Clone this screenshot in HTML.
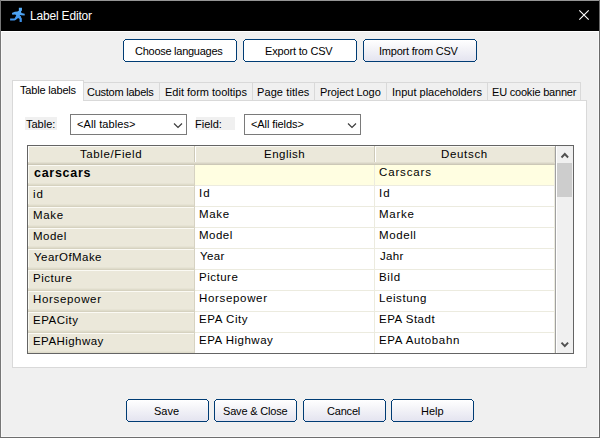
<!DOCTYPE html>
<html><head><meta charset="utf-8"><style>
html,body{margin:0;padding:0;width:600px;height:438px;overflow:hidden;background:#f0f0f0;}
body{position:relative;font-family:"Liberation Sans", sans-serif;}
</style></head><body>
<div style="position:absolute;left:0px;top:0px;width:600px;height:438px;background:#f0f0f0;"></div>
<div style="position:absolute;left:0px;top:0px;width:600px;height:1px;background:#959595;"></div>
<div style="position:absolute;left:0px;top:0px;width:1px;height:438px;background:#777;"></div>
<div style="position:absolute;left:599px;top:0px;width:1px;height:438px;background:#6a6a6a;"></div>
<div style="position:absolute;left:0px;top:437px;width:600px;height:1px;background:#6e6e6e;"></div>
<div style="position:absolute;left:1px;top:1px;width:598px;height:30px;background:#000;"></div>
<div style="position:absolute;left:1px;top:31px;width:598px;height:1px;background:#fff;"></div>
<div style="position:absolute;left:1px;top:32px;width:1px;height:405px;background:#f8f8f8;"></div>
<div style="position:absolute;left:598px;top:32px;width:1px;height:405px;background:#f8f8f8;"></div>
<div style="position:absolute;left:1px;top:436px;width:598px;height:1px;background:#f8f8f8;"></div>
<svg style="position:absolute;left:0;top:0" width="30" height="30" viewBox="0 0 30 30">
<defs><linearGradient id="ig" x1="0" y1="0" x2="0" y2="1"><stop offset="0" stop-color="#5ab0f8"/><stop offset="1" stop-color="#3a8ee8"/></linearGradient></defs>
<polygon points="18.85,7.8 21.95,7.8 21.95,10.7 21,11.1 21.4,12.9 24.7,13.8 24.7,15.5 21,15.3 21,17.3 21.8,18.4 21.8,22 19.6,22 19.6,19.1 18.1,18 15.6,19.9 14.5,20.6 10.1,20.6 10.1,18.6 14.5,18.4 16.3,15.5 15.2,14.4 12.3,14.8 11.9,13 14.8,11.8 17.4,11.5 18.85,10.7" fill="url(#ig)"/>
<circle cx="20.4" cy="15.6" r="0.6" fill="#000"/>
</svg>
<div style="position:absolute;left:30.00px;top:10.00px;font-size:12px;line-height:12px;color:#fff;font-weight:normal;letter-spacing:-0.182px;white-space:pre;">Label Editor</div>
<svg style="position:absolute;left:574px;top:5px" width="20" height="20" viewBox="0 0 20 20">
<path d="M5.3 5.3 L14.7 14.7 M14.7 5.3 L5.3 14.7" stroke="#fff" stroke-width="1.1" fill="none"/></svg>
<div style="position:absolute;left:123px;top:39px;width:114px;height:23px;"><div style="position:absolute;left:1px;top:1px;right:1px;bottom:1px;background:#ffffff;"></div><div style="position:absolute;left:2px;top:0;right:2px;height:1px;background:#003c74;"></div><div style="position:absolute;left:2px;bottom:0;right:2px;height:1px;background:#003c74;"></div><div style="position:absolute;left:0;top:2px;bottom:2px;width:1px;background:#003c74;"></div><div style="position:absolute;right:0;top:2px;bottom:2px;width:1px;background:#003c74;"></div><div style="position:absolute;left:1px;top:1px;width:1px;height:1px;background:#003c74;"></div><div style="position:absolute;right:1px;top:1px;width:1px;height:1px;background:#003c74;"></div><div style="position:absolute;left:1px;bottom:1px;width:1px;height:1px;background:#003c74;"></div><div style="position:absolute;right:1px;bottom:1px;width:1px;height:1px;background:#003c74;"></div></div>
<div style="position:absolute;left:135.00px;top:46.00px;font-size:11px;line-height:11px;color:#000;font-weight:normal;letter-spacing:-0.267px;white-space:pre;">Choose languages</div>
<div style="position:absolute;left:243px;top:39px;width:114px;height:23px;"><div style="position:absolute;left:1px;top:1px;right:1px;bottom:1px;background:#ffffff;"></div><div style="position:absolute;left:2px;top:0;right:2px;height:1px;background:#003c74;"></div><div style="position:absolute;left:2px;bottom:0;right:2px;height:1px;background:#003c74;"></div><div style="position:absolute;left:0;top:2px;bottom:2px;width:1px;background:#003c74;"></div><div style="position:absolute;right:0;top:2px;bottom:2px;width:1px;background:#003c74;"></div><div style="position:absolute;left:1px;top:1px;width:1px;height:1px;background:#003c74;"></div><div style="position:absolute;right:1px;top:1px;width:1px;height:1px;background:#003c74;"></div><div style="position:absolute;left:1px;bottom:1px;width:1px;height:1px;background:#003c74;"></div><div style="position:absolute;right:1px;bottom:1px;width:1px;height:1px;background:#003c74;"></div></div>
<div style="position:absolute;left:265.00px;top:46.00px;font-size:11px;line-height:11px;color:#000;font-weight:normal;letter-spacing:-0.167px;white-space:pre;">Export to CSV</div>
<div style="position:absolute;left:363px;top:39px;width:114px;height:23px;"><div style="position:absolute;left:1px;top:1px;right:1px;bottom:1px;background:linear-gradient(#ffffff, #f4f4f8 40%, #e4e4f0);"></div><div style="position:absolute;left:2px;top:0;right:2px;height:1px;background:#003c74;"></div><div style="position:absolute;left:2px;bottom:0;right:2px;height:1px;background:#003c74;"></div><div style="position:absolute;left:0;top:2px;bottom:2px;width:1px;background:#003c74;"></div><div style="position:absolute;right:0;top:2px;bottom:2px;width:1px;background:#003c74;"></div><div style="position:absolute;left:1px;top:1px;width:1px;height:1px;background:#003c74;"></div><div style="position:absolute;right:1px;top:1px;width:1px;height:1px;background:#003c74;"></div><div style="position:absolute;left:1px;bottom:1px;width:1px;height:1px;background:#003c74;"></div><div style="position:absolute;right:1px;bottom:1px;width:1px;height:1px;background:#003c74;"></div></div>
<div style="position:absolute;left:379.00px;top:46.00px;font-size:11px;line-height:11px;color:#000;font-weight:normal;letter-spacing:-0.214px;white-space:pre;">Import from CSV</div>
<div style="position:absolute;left:12px;top:100px;width:575px;height:268px;background:#fff;border:1px solid #d9d9d9;box-sizing:border-box;"></div>
<div style="position:absolute;left:83px;top:82px;width:77px;height:19px;background:#f0f0f0;border:1px solid #d9d9d9;box-sizing:border-box;"></div>
<div style="position:absolute;left:87.00px;top:87.00px;font-size:11px;line-height:11px;color:#000;font-weight:normal;letter-spacing:-0.250px;white-space:pre;">Custom labels</div>
<div style="position:absolute;left:159px;top:82px;width:94px;height:19px;background:#f0f0f0;border:1px solid #d9d9d9;box-sizing:border-box;"></div>
<div style="position:absolute;left:165.00px;top:87.00px;font-size:11px;line-height:11px;color:#000;font-weight:normal;letter-spacing:0.000px;white-space:pre;">Edit form tooltips</div>
<div style="position:absolute;left:252px;top:82px;width:63px;height:19px;background:#f0f0f0;border:1px solid #d9d9d9;box-sizing:border-box;"></div>
<div style="position:absolute;left:257.00px;top:87.00px;font-size:11px;line-height:11px;color:#000;font-weight:normal;letter-spacing:0.100px;white-space:pre;">Page titles</div>
<div style="position:absolute;left:314px;top:82px;width:73px;height:19px;background:#f0f0f0;border:1px solid #d9d9d9;box-sizing:border-box;"></div>
<div style="position:absolute;left:320.00px;top:87.00px;font-size:11px;line-height:11px;color:#000;font-weight:normal;letter-spacing:-0.091px;white-space:pre;">Project Logo</div>
<div style="position:absolute;left:386px;top:82px;width:102px;height:19px;background:#f0f0f0;border:1px solid #d9d9d9;box-sizing:border-box;"></div>
<div style="position:absolute;left:392.00px;top:87.00px;font-size:11px;line-height:11px;color:#000;font-weight:normal;letter-spacing:0.000px;white-space:pre;">Input placeholders</div>
<div style="position:absolute;left:487px;top:82px;width:94px;height:19px;background:#f0f0f0;border:1px solid #d9d9d9;box-sizing:border-box;"></div>
<div style="position:absolute;left:492.00px;top:87.00px;font-size:11px;line-height:11px;color:#000;font-weight:normal;letter-spacing:-0.200px;white-space:pre;">EU cookie banner</div>
<div style="position:absolute;left:12px;top:80px;width:72px;height:21px;background:#fff;border:1px solid #d9d9d9;border-bottom:none;box-sizing:border-box;"></div>
<div style="position:absolute;left:20.00px;top:85.00px;font-size:11px;line-height:11px;color:#000;font-weight:normal;letter-spacing:-0.182px;white-space:pre;">Table labels</div>
<div style="position:absolute;left:25px;top:117px;width:32px;height:13px;background:#f0f0f0;"></div>
<div style="position:absolute;left:26.00px;top:119.00px;font-size:11px;line-height:11px;color:#000;font-weight:normal;letter-spacing:0.000px;white-space:pre;">Table:</div>
<div style="position:absolute;left:196px;top:117px;width:39px;height:13px;background:#f0f0f0;"></div>
<div style="position:absolute;left:195.00px;top:119.00px;font-size:11px;line-height:11px;color:#000;font-weight:normal;letter-spacing:0.000px;white-space:pre;">Field:</div>
<div style="position:absolute;left:70px;top:114px;width:117px;height:21px;background:#fff;border:1px solid #7a7a7a;box-sizing:border-box;"></div>
<svg style="position:absolute;left:173px;top:120.5px" width="10" height="8" viewBox="0 0 10 8"><path d="M1 2.5 L5 6.5 L9 2.5" stroke="#3a3a3a" stroke-width="1.15" fill="none"/></svg>
<div style="position:absolute;left:77.00px;top:119.00px;font-size:11px;line-height:11px;color:#000;font-weight:normal;letter-spacing:0.091px;white-space:pre;">&lt;All tables&gt;</div>
<div style="position:absolute;left:244px;top:114px;width:117px;height:21px;background:#fff;border:1px solid #7a7a7a;box-sizing:border-box;"></div>
<svg style="position:absolute;left:347px;top:120.5px" width="10" height="8" viewBox="0 0 10 8"><path d="M1 2.5 L5 6.5 L9 2.5" stroke="#3a3a3a" stroke-width="1.15" fill="none"/></svg>
<div style="position:absolute;left:251.00px;top:119.00px;font-size:11px;line-height:11px;color:#000;font-weight:normal;letter-spacing:-0.091px;white-space:pre;">&lt;All fields&gt;</div>
<div style="position:absolute;left:27px;top:145px;width:547px;height:209px;background:#fff;border:1px solid #646464;box-sizing:border-box;"></div>
<div style="position:absolute;left:28px;top:146px;width:527px;height:19px;background:#ebe8da;"></div>
<div style="position:absolute;left:28px;top:146px;width:527px;height:1px;background:#fbfaf4;"></div>
<div style="position:absolute;left:28px;top:162px;width:527px;height:1px;background:#e2dfd0;"></div>
<div style="position:absolute;left:28px;top:163px;width:527px;height:1px;background:#d8d4c5;"></div>
<div style="position:absolute;left:28px;top:164px;width:527px;height:1px;background:#ccc8b7;"></div>
<div style="position:absolute;left:194px;top:146px;width:1px;height:16px;background:#cdc9b8;"></div>
<div style="position:absolute;left:195px;top:147px;width:1px;height:15px;background:#fff;"></div>
<div style="position:absolute;left:374px;top:146px;width:1px;height:16px;background:#cdc9b8;"></div>
<div style="position:absolute;left:375px;top:147px;width:1px;height:15px;background:#fff;"></div>
<div style="position:absolute;left:28px;top:147px;width:1px;height:15px;background:#fff;"></div>
<div style="position:absolute;left:554px;top:147px;width:1px;height:15px;background:#dcd8c8;"></div>
<div style="position:absolute;left:80.00px;top:149.00px;font-size:11.5px;line-height:11.5px;color:#000;font-weight:normal;letter-spacing:0.600px;white-space:pre;">Table/Field</div>
<div style="position:absolute;left:264.00px;top:149.00px;font-size:11.5px;line-height:11.5px;color:#000;font-weight:normal;letter-spacing:0.500px;white-space:pre;">English</div>
<div style="position:absolute;left:441.00px;top:149.00px;font-size:11.5px;line-height:11.5px;color:#000;font-weight:normal;letter-spacing:0.667px;white-space:pre;">Deutsch</div>
<div style="position:absolute;left:28px;top:165px;width:166px;height:21px;background:#ebe8da;"></div>
<div style="position:absolute;left:28px;top:165px;width:166px;height:1px;background:#fbfaf4;"></div>
<div style="position:absolute;left:28px;top:183px;width:166px;height:1px;background:#e6e3d4;"></div>
<div style="position:absolute;left:28px;top:184px;width:166px;height:1px;background:#dfdccb;"></div>
<div style="position:absolute;left:28px;top:185px;width:166px;height:1px;background:#d6d2c0;"></div>
<div style="position:absolute;left:28px;top:166px;width:1px;height:17px;background:#f8f8f0;"></div>
<div style="position:absolute;left:194px;top:165px;width:1px;height:21px;background:#d6d2c2;"></div>
<div style="position:absolute;left:195px;top:165px;width:360px;height:20px;background:#fffee1;"></div>
<div style="position:absolute;left:195px;top:185px;width:360px;height:1px;background:#ecebdf;"></div>
<div style="position:absolute;left:374px;top:165px;width:1px;height:21px;background:#ecebdf;"></div>
<div style="position:absolute;left:554px;top:165px;width:1px;height:21px;background:#ecebdf;"></div>
<div style="position:absolute;left:34.00px;top:167.00px;font-size:12.5px;line-height:12.5px;color:#000;font-weight:bold;letter-spacing:0.714px;white-space:pre;">carscars</div>
<div style="position:absolute;left:379.00px;top:167.00px;font-size:11.5px;line-height:11.5px;color:#000;font-weight:normal;letter-spacing:0.857px;white-space:pre;">Carscars</div>
<div style="position:absolute;left:28px;top:186px;width:166px;height:21px;background:#ebe8da;"></div>
<div style="position:absolute;left:28px;top:186px;width:166px;height:1px;background:#fbfaf4;"></div>
<div style="position:absolute;left:28px;top:204px;width:166px;height:1px;background:#e6e3d4;"></div>
<div style="position:absolute;left:28px;top:205px;width:166px;height:1px;background:#dfdccb;"></div>
<div style="position:absolute;left:28px;top:206px;width:166px;height:1px;background:#d6d2c0;"></div>
<div style="position:absolute;left:28px;top:187px;width:1px;height:17px;background:#f8f8f0;"></div>
<div style="position:absolute;left:194px;top:186px;width:1px;height:21px;background:#d6d2c2;"></div>
<div style="position:absolute;left:195px;top:186px;width:360px;height:20px;background:#fff;"></div>
<div style="position:absolute;left:195px;top:206px;width:360px;height:1px;background:#ecebdf;"></div>
<div style="position:absolute;left:374px;top:186px;width:1px;height:21px;background:#ecebdf;"></div>
<div style="position:absolute;left:554px;top:186px;width:1px;height:21px;background:#ecebdf;"></div>
<div style="position:absolute;left:33.00px;top:189.00px;font-size:11.5px;line-height:11.5px;color:#000;font-weight:normal;letter-spacing:1.000px;white-space:pre;">id</div>
<div style="position:absolute;left:199.00px;top:188.00px;font-size:11.5px;line-height:11.5px;color:#000;font-weight:normal;letter-spacing:1.000px;white-space:pre;">Id</div>
<div style="position:absolute;left:379.00px;top:188.00px;font-size:11.5px;line-height:11.5px;color:#000;font-weight:normal;letter-spacing:1.000px;white-space:pre;">Id</div>
<div style="position:absolute;left:28px;top:207px;width:166px;height:21px;background:#ebe8da;"></div>
<div style="position:absolute;left:28px;top:207px;width:166px;height:1px;background:#fbfaf4;"></div>
<div style="position:absolute;left:28px;top:225px;width:166px;height:1px;background:#e6e3d4;"></div>
<div style="position:absolute;left:28px;top:226px;width:166px;height:1px;background:#dfdccb;"></div>
<div style="position:absolute;left:28px;top:227px;width:166px;height:1px;background:#d6d2c0;"></div>
<div style="position:absolute;left:28px;top:208px;width:1px;height:17px;background:#f8f8f0;"></div>
<div style="position:absolute;left:194px;top:207px;width:1px;height:21px;background:#d6d2c2;"></div>
<div style="position:absolute;left:195px;top:207px;width:360px;height:20px;background:#fff;"></div>
<div style="position:absolute;left:195px;top:227px;width:360px;height:1px;background:#ecebdf;"></div>
<div style="position:absolute;left:374px;top:207px;width:1px;height:21px;background:#ecebdf;"></div>
<div style="position:absolute;left:554px;top:207px;width:1px;height:21px;background:#ecebdf;"></div>
<div style="position:absolute;left:33.00px;top:210.00px;font-size:11.5px;line-height:11.5px;color:#000;font-weight:normal;letter-spacing:0.667px;white-space:pre;">Make</div>
<div style="position:absolute;left:199.00px;top:209.00px;font-size:11.5px;line-height:11.5px;color:#000;font-weight:normal;letter-spacing:0.667px;white-space:pre;">Make</div>
<div style="position:absolute;left:379.00px;top:209.00px;font-size:11.5px;line-height:11.5px;color:#000;font-weight:normal;letter-spacing:0.750px;white-space:pre;">Marke</div>
<div style="position:absolute;left:28px;top:228px;width:166px;height:21px;background:#ebe8da;"></div>
<div style="position:absolute;left:28px;top:228px;width:166px;height:1px;background:#fbfaf4;"></div>
<div style="position:absolute;left:28px;top:246px;width:166px;height:1px;background:#e6e3d4;"></div>
<div style="position:absolute;left:28px;top:247px;width:166px;height:1px;background:#dfdccb;"></div>
<div style="position:absolute;left:28px;top:248px;width:166px;height:1px;background:#d6d2c0;"></div>
<div style="position:absolute;left:28px;top:229px;width:1px;height:17px;background:#f8f8f0;"></div>
<div style="position:absolute;left:194px;top:228px;width:1px;height:21px;background:#d6d2c2;"></div>
<div style="position:absolute;left:195px;top:228px;width:360px;height:20px;background:#fff;"></div>
<div style="position:absolute;left:195px;top:248px;width:360px;height:1px;background:#ecebdf;"></div>
<div style="position:absolute;left:374px;top:228px;width:1px;height:21px;background:#ecebdf;"></div>
<div style="position:absolute;left:554px;top:228px;width:1px;height:21px;background:#ecebdf;"></div>
<div style="position:absolute;left:33.00px;top:231.00px;font-size:11.5px;line-height:11.5px;color:#000;font-weight:normal;letter-spacing:0.500px;white-space:pre;">Model</div>
<div style="position:absolute;left:199.00px;top:230.00px;font-size:11.5px;line-height:11.5px;color:#000;font-weight:normal;letter-spacing:0.500px;white-space:pre;">Model</div>
<div style="position:absolute;left:379.00px;top:230.00px;font-size:11.5px;line-height:11.5px;color:#000;font-weight:normal;letter-spacing:0.600px;white-space:pre;">Modell</div>
<div style="position:absolute;left:28px;top:249px;width:166px;height:21px;background:#ebe8da;"></div>
<div style="position:absolute;left:28px;top:249px;width:166px;height:1px;background:#fbfaf4;"></div>
<div style="position:absolute;left:28px;top:267px;width:166px;height:1px;background:#e6e3d4;"></div>
<div style="position:absolute;left:28px;top:268px;width:166px;height:1px;background:#dfdccb;"></div>
<div style="position:absolute;left:28px;top:269px;width:166px;height:1px;background:#d6d2c0;"></div>
<div style="position:absolute;left:28px;top:250px;width:1px;height:17px;background:#f8f8f0;"></div>
<div style="position:absolute;left:194px;top:249px;width:1px;height:21px;background:#d6d2c2;"></div>
<div style="position:absolute;left:195px;top:249px;width:360px;height:20px;background:#fff;"></div>
<div style="position:absolute;left:195px;top:269px;width:360px;height:1px;background:#ecebdf;"></div>
<div style="position:absolute;left:374px;top:249px;width:1px;height:21px;background:#ecebdf;"></div>
<div style="position:absolute;left:554px;top:249px;width:1px;height:21px;background:#ecebdf;"></div>
<div style="position:absolute;left:34.00px;top:252.00px;font-size:11.5px;line-height:11.5px;color:#000;font-weight:normal;letter-spacing:0.444px;white-space:pre;">YearOfMake</div>
<div style="position:absolute;left:200.00px;top:251.00px;font-size:11.5px;line-height:11.5px;color:#000;font-weight:normal;letter-spacing:0.333px;white-space:pre;">Year</div>
<div style="position:absolute;left:380.00px;top:251.00px;font-size:11.5px;line-height:11.5px;color:#000;font-weight:normal;letter-spacing:0.333px;white-space:pre;">Jahr</div>
<div style="position:absolute;left:28px;top:270px;width:166px;height:21px;background:#ebe8da;"></div>
<div style="position:absolute;left:28px;top:270px;width:166px;height:1px;background:#fbfaf4;"></div>
<div style="position:absolute;left:28px;top:288px;width:166px;height:1px;background:#e6e3d4;"></div>
<div style="position:absolute;left:28px;top:289px;width:166px;height:1px;background:#dfdccb;"></div>
<div style="position:absolute;left:28px;top:290px;width:166px;height:1px;background:#d6d2c0;"></div>
<div style="position:absolute;left:28px;top:271px;width:1px;height:17px;background:#f8f8f0;"></div>
<div style="position:absolute;left:194px;top:270px;width:1px;height:21px;background:#d6d2c2;"></div>
<div style="position:absolute;left:195px;top:270px;width:360px;height:20px;background:#fff;"></div>
<div style="position:absolute;left:195px;top:290px;width:360px;height:1px;background:#ecebdf;"></div>
<div style="position:absolute;left:374px;top:270px;width:1px;height:21px;background:#ecebdf;"></div>
<div style="position:absolute;left:554px;top:270px;width:1px;height:21px;background:#ecebdf;"></div>
<div style="position:absolute;left:33.00px;top:273.00px;font-size:11.5px;line-height:11.5px;color:#000;font-weight:normal;letter-spacing:0.500px;white-space:pre;">Picture</div>
<div style="position:absolute;left:199.00px;top:272.00px;font-size:11.5px;line-height:11.5px;color:#000;font-weight:normal;letter-spacing:0.500px;white-space:pre;">Picture</div>
<div style="position:absolute;left:379.00px;top:272.00px;font-size:11.5px;line-height:11.5px;color:#000;font-weight:normal;letter-spacing:0.667px;white-space:pre;">Bild</div>
<div style="position:absolute;left:28px;top:291px;width:166px;height:21px;background:#ebe8da;"></div>
<div style="position:absolute;left:28px;top:291px;width:166px;height:1px;background:#fbfaf4;"></div>
<div style="position:absolute;left:28px;top:309px;width:166px;height:1px;background:#e6e3d4;"></div>
<div style="position:absolute;left:28px;top:310px;width:166px;height:1px;background:#dfdccb;"></div>
<div style="position:absolute;left:28px;top:311px;width:166px;height:1px;background:#d6d2c0;"></div>
<div style="position:absolute;left:28px;top:292px;width:1px;height:17px;background:#f8f8f0;"></div>
<div style="position:absolute;left:194px;top:291px;width:1px;height:21px;background:#d6d2c2;"></div>
<div style="position:absolute;left:195px;top:291px;width:360px;height:20px;background:#fff;"></div>
<div style="position:absolute;left:195px;top:311px;width:360px;height:1px;background:#ecebdf;"></div>
<div style="position:absolute;left:374px;top:291px;width:1px;height:21px;background:#ecebdf;"></div>
<div style="position:absolute;left:554px;top:291px;width:1px;height:21px;background:#ecebdf;"></div>
<div style="position:absolute;left:33.00px;top:294.00px;font-size:11.5px;line-height:11.5px;color:#000;font-weight:normal;letter-spacing:0.667px;white-space:pre;">Horsepower</div>
<div style="position:absolute;left:199.00px;top:293.00px;font-size:11.5px;line-height:11.5px;color:#000;font-weight:normal;letter-spacing:0.667px;white-space:pre;">Horsepower</div>
<div style="position:absolute;left:379.00px;top:293.00px;font-size:11.5px;line-height:11.5px;color:#000;font-weight:normal;letter-spacing:0.571px;white-space:pre;">Leistung</div>
<div style="position:absolute;left:28px;top:312px;width:166px;height:21px;background:#ebe8da;"></div>
<div style="position:absolute;left:28px;top:312px;width:166px;height:1px;background:#fbfaf4;"></div>
<div style="position:absolute;left:28px;top:330px;width:166px;height:1px;background:#e6e3d4;"></div>
<div style="position:absolute;left:28px;top:331px;width:166px;height:1px;background:#dfdccb;"></div>
<div style="position:absolute;left:28px;top:332px;width:166px;height:1px;background:#d6d2c0;"></div>
<div style="position:absolute;left:28px;top:313px;width:1px;height:17px;background:#f8f8f0;"></div>
<div style="position:absolute;left:194px;top:312px;width:1px;height:21px;background:#d6d2c2;"></div>
<div style="position:absolute;left:195px;top:312px;width:360px;height:20px;background:#fff;"></div>
<div style="position:absolute;left:195px;top:332px;width:360px;height:1px;background:#ecebdf;"></div>
<div style="position:absolute;left:374px;top:312px;width:1px;height:21px;background:#ecebdf;"></div>
<div style="position:absolute;left:554px;top:312px;width:1px;height:21px;background:#ecebdf;"></div>
<div style="position:absolute;left:33.00px;top:315.00px;font-size:11.5px;line-height:11.5px;color:#000;font-weight:normal;letter-spacing:0.500px;white-space:pre;">EPACity</div>
<div style="position:absolute;left:199.00px;top:314.00px;font-size:11.5px;line-height:11.5px;color:#000;font-weight:normal;letter-spacing:0.571px;white-space:pre;">EPA City</div>
<div style="position:absolute;left:379.00px;top:314.00px;font-size:11.5px;line-height:11.5px;color:#000;font-weight:normal;letter-spacing:0.500px;white-space:pre;">EPA Stadt</div>
<div style="position:absolute;left:28px;top:333px;width:166px;height:21px;background:#ebe8da;"></div>
<div style="position:absolute;left:28px;top:333px;width:166px;height:1px;background:#fbfaf4;"></div>
<div style="position:absolute;left:28px;top:351px;width:166px;height:1px;background:#e6e3d4;"></div>
<div style="position:absolute;left:28px;top:352px;width:166px;height:1px;background:#dfdccb;"></div>
<div style="position:absolute;left:28px;top:353px;width:166px;height:1px;background:#d6d2c0;"></div>
<div style="position:absolute;left:28px;top:334px;width:1px;height:17px;background:#f8f8f0;"></div>
<div style="position:absolute;left:194px;top:333px;width:1px;height:21px;background:#d6d2c2;"></div>
<div style="position:absolute;left:195px;top:333px;width:360px;height:20px;background:#fff;"></div>
<div style="position:absolute;left:195px;top:353px;width:360px;height:1px;background:#ecebdf;"></div>
<div style="position:absolute;left:374px;top:333px;width:1px;height:21px;background:#ecebdf;"></div>
<div style="position:absolute;left:554px;top:333px;width:1px;height:21px;background:#ecebdf;"></div>
<div style="position:absolute;left:33.00px;top:336.00px;font-size:11.5px;line-height:11.5px;color:#000;font-weight:normal;letter-spacing:0.444px;white-space:pre;">EPAHighway</div>
<div style="position:absolute;left:199.00px;top:335.00px;font-size:11.5px;line-height:11.5px;color:#000;font-weight:normal;letter-spacing:0.500px;white-space:pre;">EPA Highway</div>
<div style="position:absolute;left:379.00px;top:335.00px;font-size:11.5px;line-height:11.5px;color:#000;font-weight:normal;letter-spacing:0.636px;white-space:pre;">EPA Autobahn</div>
<div style="position:absolute;left:27px;top:145px;width:547px;height:209px;border:1px solid #646464;box-sizing:border-box;"></div>
<div style="position:absolute;left:555px;top:146px;width:1px;height:207px;background:#a0a0a0;"></div>
<div style="position:absolute;left:556px;top:146px;width:1px;height:207px;background:#fff;"></div>
<div style="position:absolute;left:557px;top:146px;width:16px;height:207px;background:#f0f0f0;"></div>
<div style="position:absolute;left:557px;top:163px;width:15px;height:34px;background:#cdcdcd;"></div>
<svg style="position:absolute;left:559.6px;top:149.6px" width="10" height="10" viewBox="0 0 10 10"><path d="M1.5 7.5 L4.8 4 L8.1 7.5" stroke="#505050" stroke-width="1.9" fill="none"/></svg>
<svg style="position:absolute;left:559.6px;top:340.2px" width="10" height="10" viewBox="0 0 10 10"><path d="M1.5 2.6 L4.8 6.2 L8.1 2.6" stroke="#505050" stroke-width="1.9" fill="none"/></svg>
<div style="position:absolute;left:126px;top:399px;width:83px;height:23px;"><div style="position:absolute;left:1px;top:1px;right:1px;bottom:1px;background:linear-gradient(#ffffff, #f4f4f8 40%, #e4e4f0);"></div><div style="position:absolute;left:2px;top:0;right:2px;height:1px;background:#003c74;"></div><div style="position:absolute;left:2px;bottom:0;right:2px;height:1px;background:#003c74;"></div><div style="position:absolute;left:0;top:2px;bottom:2px;width:1px;background:#003c74;"></div><div style="position:absolute;right:0;top:2px;bottom:2px;width:1px;background:#003c74;"></div><div style="position:absolute;left:1px;top:1px;width:1px;height:1px;background:#003c74;"></div><div style="position:absolute;right:1px;top:1px;width:1px;height:1px;background:#003c74;"></div><div style="position:absolute;left:1px;bottom:1px;width:1px;height:1px;background:#003c74;"></div><div style="position:absolute;right:1px;bottom:1px;width:1px;height:1px;background:#003c74;"></div></div>
<div style="position:absolute;left:154.00px;top:406.00px;font-size:11px;line-height:11px;color:#000;font-weight:normal;letter-spacing:0.000px;white-space:pre;">Save</div>
<div style="position:absolute;left:214px;top:399px;width:83px;height:23px;"><div style="position:absolute;left:1px;top:1px;right:1px;bottom:1px;background:linear-gradient(#ffffff, #f4f4f8 40%, #e4e4f0);"></div><div style="position:absolute;left:2px;top:0;right:2px;height:1px;background:#003c74;"></div><div style="position:absolute;left:2px;bottom:0;right:2px;height:1px;background:#003c74;"></div><div style="position:absolute;left:0;top:2px;bottom:2px;width:1px;background:#003c74;"></div><div style="position:absolute;right:0;top:2px;bottom:2px;width:1px;background:#003c74;"></div><div style="position:absolute;left:1px;top:1px;width:1px;height:1px;background:#003c74;"></div><div style="position:absolute;right:1px;top:1px;width:1px;height:1px;background:#003c74;"></div><div style="position:absolute;left:1px;bottom:1px;width:1px;height:1px;background:#003c74;"></div><div style="position:absolute;right:1px;bottom:1px;width:1px;height:1px;background:#003c74;"></div></div>
<div style="position:absolute;left:223.00px;top:406.00px;font-size:11px;line-height:11px;color:#000;font-weight:normal;letter-spacing:-0.182px;white-space:pre;">Save &amp; Close</div>
<div style="position:absolute;left:303px;top:399px;width:83px;height:23px;"><div style="position:absolute;left:1px;top:1px;right:1px;bottom:1px;background:linear-gradient(#ffffff, #f4f4f8 40%, #e4e4f0);"></div><div style="position:absolute;left:2px;top:0;right:2px;height:1px;background:#003c74;"></div><div style="position:absolute;left:2px;bottom:0;right:2px;height:1px;background:#003c74;"></div><div style="position:absolute;left:0;top:2px;bottom:2px;width:1px;background:#003c74;"></div><div style="position:absolute;right:0;top:2px;bottom:2px;width:1px;background:#003c74;"></div><div style="position:absolute;left:1px;top:1px;width:1px;height:1px;background:#003c74;"></div><div style="position:absolute;right:1px;top:1px;width:1px;height:1px;background:#003c74;"></div><div style="position:absolute;left:1px;bottom:1px;width:1px;height:1px;background:#003c74;"></div><div style="position:absolute;right:1px;bottom:1px;width:1px;height:1px;background:#003c74;"></div></div>
<div style="position:absolute;left:327.00px;top:406.00px;font-size:11px;line-height:11px;color:#000;font-weight:normal;letter-spacing:-0.200px;white-space:pre;">Cancel</div>
<div style="position:absolute;left:391px;top:399px;width:83px;height:23px;"><div style="position:absolute;left:1px;top:1px;right:1px;bottom:1px;background:linear-gradient(#ffffff, #f4f4f8 40%, #e4e4f0);"></div><div style="position:absolute;left:2px;top:0;right:2px;height:1px;background:#003c74;"></div><div style="position:absolute;left:2px;bottom:0;right:2px;height:1px;background:#003c74;"></div><div style="position:absolute;left:0;top:2px;bottom:2px;width:1px;background:#003c74;"></div><div style="position:absolute;right:0;top:2px;bottom:2px;width:1px;background:#003c74;"></div><div style="position:absolute;left:1px;top:1px;width:1px;height:1px;background:#003c74;"></div><div style="position:absolute;right:1px;top:1px;width:1px;height:1px;background:#003c74;"></div><div style="position:absolute;left:1px;bottom:1px;width:1px;height:1px;background:#003c74;"></div><div style="position:absolute;right:1px;bottom:1px;width:1px;height:1px;background:#003c74;"></div></div>
<div style="position:absolute;left:421.00px;top:406.00px;font-size:11px;line-height:11px;color:#000;font-weight:normal;letter-spacing:0.000px;white-space:pre;">Help</div>
</body></html>
